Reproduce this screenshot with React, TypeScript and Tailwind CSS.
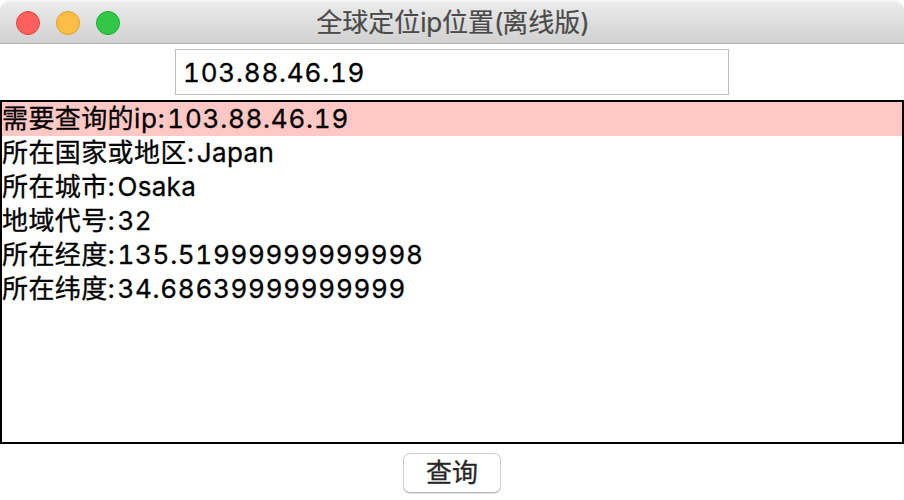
type Result = { label: string; suffix?: string; value: string; spacing: string };

const results: Result[] = [
  { label: '需要查询的', suffix: 'ip', value: '103.88.46.19', spacing: 'tracking-[0.75px]' },
  { label: '所在国家或地区', value: 'Japan', spacing: 'tracking-[0.4px]' },
  { label: '所在城市', value: 'Osaka', spacing: 'tracking-[0.3px]' },
  { label: '地域代号', value: '32', spacing: 'tracking-[0.4px]' },
  { label: '所在经度', value: '135.51999999999998', spacing: 'tracking-[0.69px]' },
  { label: '所在纬度', value: '34.68639999999999', spacing: 'tracking-[0.7px]' },
];

function TitleBar() {
  return (
    <header className="grid h-11 shrink-0 grid-cols-[1fr_auto_1fr] items-center rounded-t-[10px] border-t-2 border-b border-t-[#f5f5f5] border-b-[#b1b1b1] bg-linear-to-b from-[#ebebeb] to-[#d1d1d1]">
      <div className="flex gap-4 pl-4">
        <span className="size-6 rounded-full border border-[#e2463f] bg-[#ff605c]" />
        <span className="size-6 rounded-full border border-[#dfa023] bg-[#ffbd44]" />
        <span className="size-6 rounded-full border border-[#1dad2b] bg-[#33c748]" />
      </div>
      <h1 className="pl-px text-[26px] leading-[40px] text-[#4a4a4a] [-webkit-text-stroke:0.2px]">
        全球定位<span className="tracking-[-0.2px]">ip</span>位置<span className="tracking-[-1.2px]">(</span>离线版<span className="tracking-[-1px]">)</span>
      </h1>
      <div />
    </header>
  );
}

export default function App() {
  return (
    <main className="flex h-[500px] w-[904px] flex-col bg-white font-[Inter,'Noto_Sans_CJK_SC',sans-serif] text-[26px] text-black">
      <TitleBar />
      <div className="flex h-14 shrink-0 justify-center pt-[5px]">
        <input
          className="h-[46px] w-[554px] border border-[#bebebe] bg-white pl-[7px] tracking-[0.8px] tabular-nums outline-none [-webkit-text-stroke:0.3px]"
          defaultValue="103.88.46.19"
        />
      </div>
      <ul className="h-[344px] shrink-0 border-2 border-black">
        {results.map((row, index) => (
          <li
            key={row.label}
            className={`flex h-[34px] items-baseline leading-[34px] whitespace-nowrap [-webkit-text-stroke:0.3px] ${index === 0 ? 'bg-[#ffc8c4]' : ''}`}
          >
            <span className="tracking-[0.4px]">{row.label}</span>
            {row.suffix && <span className="tracking-[0.6px]">{row.suffix}</span>}
            <span className="tracking-[2.4px]">:</span>
            <span className={`tabular-nums ${row.spacing}`}>{row.value}</span>
          </li>
        ))}
      </ul>
      <div className="flex justify-center pt-[9px]">
        <button className="h-10 w-[98px] rounded-[7px] border border-[#cfcfcf] border-b-[#b8b8b8] bg-white leading-[38px] text-[#262626] shadow-[0_1px_1px_rgba(0,0,0,0.12)] [-webkit-text-stroke:0.3px]">
          查询
        </button>
      </div>
    </main>
  );
}
